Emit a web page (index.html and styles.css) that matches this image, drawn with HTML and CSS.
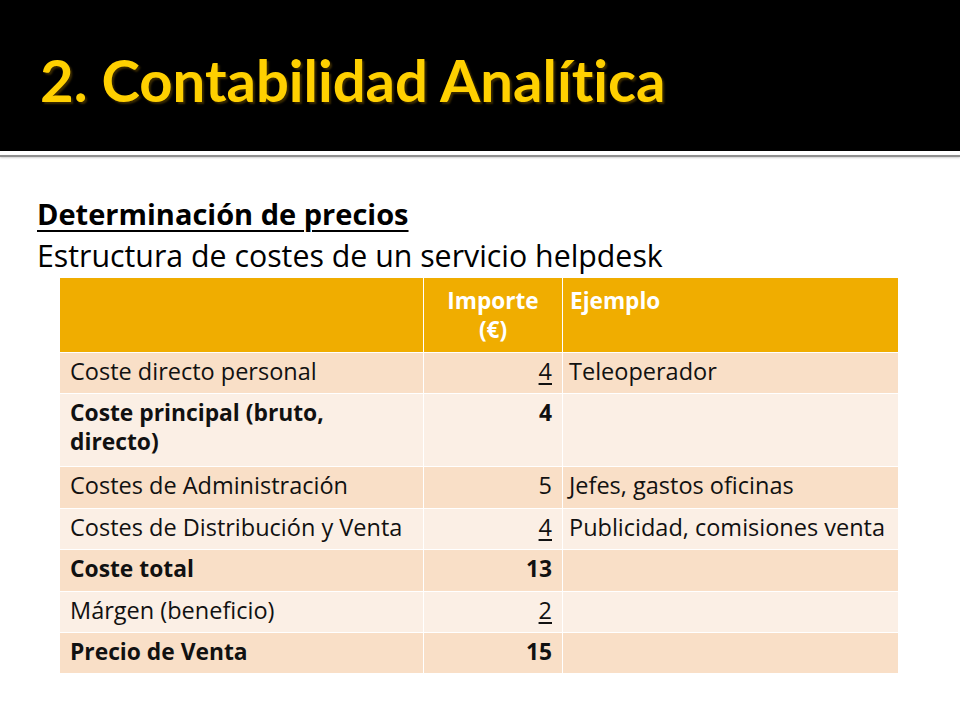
FILE: index.html
```html
<!DOCTYPE html>
<html lang="es">
<head>
<meta charset="utf-8">
<title>2. Contabilidad Analítica</title>
<link rel="stylesheet" href="styles.css">
</head>
<body>
<header class="band">
  <h1 class="title">2. Contabilidad Analítica</h1>
</header>
<div class="rule"></div>
<main class="content">
  <p class="subtitle">Determinación de precios</p>
  <p class="lead">Estructura de costes de un servicio helpdesk</p>
  <table class="costs">
    <thead>
      <tr>
        <th class="c1"></th>
        <th class="c2">Importe<br>(€)</th>
        <th class="c3">Ejemplo</th>
      </tr>
    </thead>
    <tbody>
      <tr class="dark">
        <td>Coste directo personal</td>
        <td class="num"><u>4</u></td>
        <td class="ex">Teleoperador</td>
      </tr>
      <tr class="light tall bold">
        <td>Coste principal (bruto,<br>directo)</td>
        <td class="num">4</td>
        <td class="ex"></td>
      </tr>
      <tr class="dark r41">
        <td>Costes de Administración</td>
        <td class="num">5</td>
        <td class="ex">Jefes, gastos oficinas</td>
      </tr>
      <tr class="light">
        <td>Costes de Distribución y Venta</td>
        <td class="num"><u>4</u></td>
        <td class="ex">Publicidad, comisiones venta</td>
      </tr>
      <tr class="dark bold r41">
        <td>Coste total</td>
        <td class="num">13</td>
        <td class="ex"></td>
      </tr>
      <tr class="light">
        <td>Márgen (beneficio)</td>
        <td class="num"><u>2</u></td>
        <td class="ex"></td>
      </tr>
      <tr class="dark bold">
        <td>Precio de Venta</td>
        <td class="num">15</td>
        <td class="ex"></td>
      </tr>
    </tbody>
  </table>
</main>
</body>
</html>
```
FILE: styles.css
```css
html, body {
  margin: 0;
  padding: 0;
  background: #ffffff;
}
body {
  font-family: "Open Sans", Lato, sans-serif;
  color: #000;
  width: 960px;
  height: 720px;
  overflow: hidden;
  font-variant-ligatures: none;
}
.band {
  background: #000;
  height: 151px;
  box-sizing: border-box;
  padding: 45px 0 0 40px;
}
.title {
  margin: 0;
  font-family: Lato, sans-serif;
  font-weight: 700;
  font-size: 58px;
  line-height: 70px;
  color: #ffd000;
  text-shadow: 2px 2px 2px #3a2a00;
}
.rule {
  margin-top: 4px;
  height: 2px;
  background: #8e8e8e;
  box-shadow: 0 1px 2px #cfcfcf;
}
.content {
  padding: 36px 0 0 37px;
}
.subtitle {
  margin: 0;
  font-size: 29px;
  line-height: 42px;
  font-weight: 700;
  text-decoration: underline;
  text-decoration-thickness: 2px;
  text-underline-offset: 5px;
}
.lead {
  margin: 0;
  font-size: 30.3px;
  line-height: 42px;
}
.costs {
  margin: 0 0 0 22px;
  width: 840px;
  border-collapse: separate;
  border-spacing: 1px;
  table-layout: fixed;
  font-size: 23.5px;
  line-height: 29px;
  color: #111;
}
.costs th, .costs td {
  vertical-align: top;
  box-sizing: border-box;
}
.costs th {
  background: #f0ad00;
  color: #fff;
  font-weight: 700;
  font-size: 22.6px;
  height: 73px;
  padding: 8px 7px;
  text-align: left;
}
.costs th.c2 { text-align: center; padding: 8px 0; }
.c1 { width: 363px; }
.c2 { width: 138px; }
.costs td {
  height: 40px;
  padding: 4px 10px 0 10px;
}
.costs td.num { text-align: right; padding-right: 10px; }
.costs td.ex { padding-left: 6px; }
.costs u { text-underline-offset: 3px; }
.dark td { background: #f9dfc7; }
.light td { background: #fbefe5; }
.tall td { height: 72px; }
.r41 td { height: 41px; }
.bold td { font-weight: 700; font-size: 22.8px; }
```
